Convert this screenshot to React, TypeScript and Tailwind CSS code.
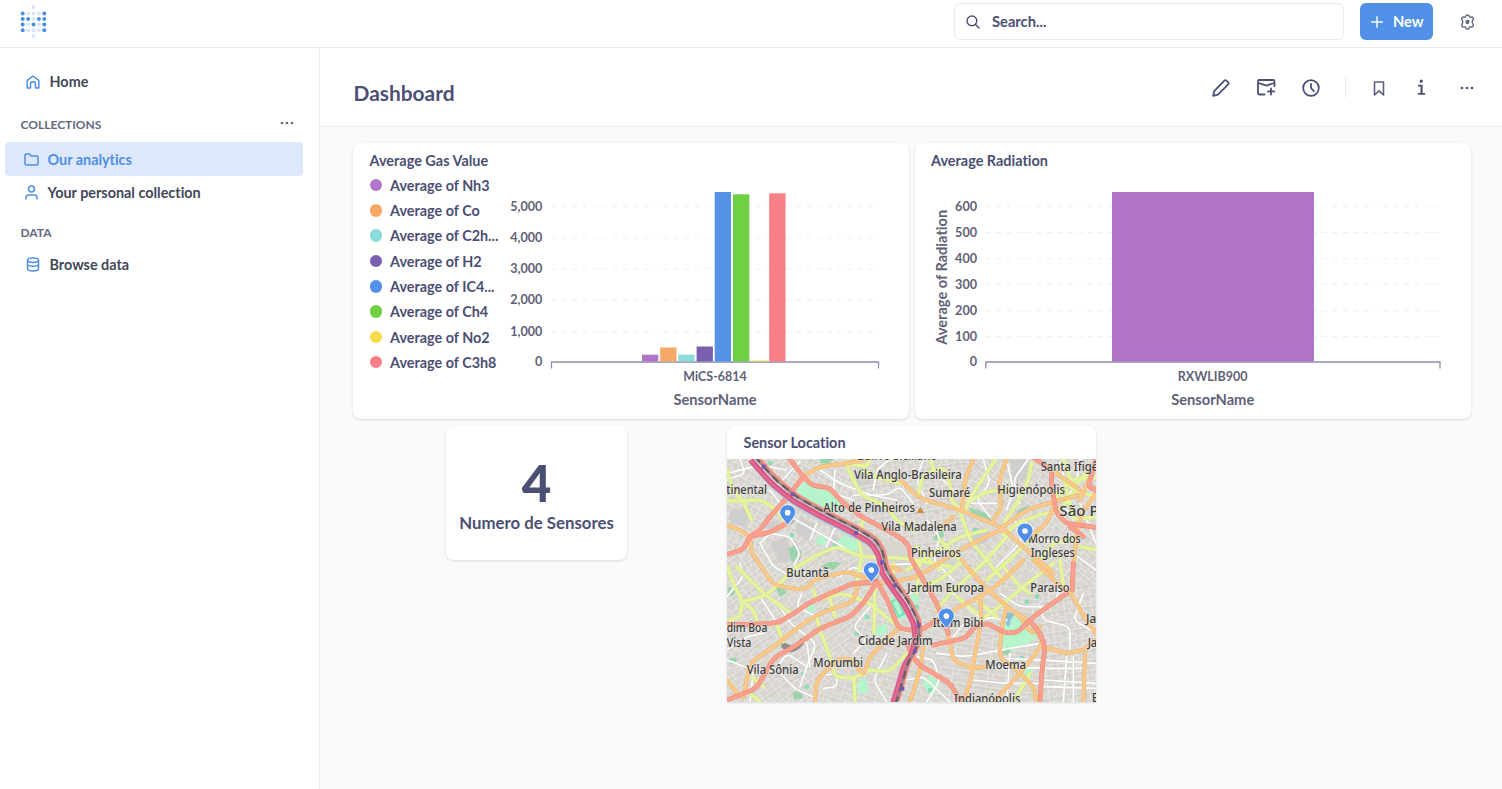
import React from "react";

type Pt = [number, number];

const LOGO_ROWS = ["..l..", "dllld", "ddldd", "dldld", "dllld", "..l.."];
const LOGO_Y = [7, 13.4, 19, 24.6, 30.2, 35.7];

function Logo() {
  return (
    <svg width="30" height="34" viewBox="18 4 30 34">
      {LOGO_ROWS.map((row, r) =>
        row.split("").map((c, i) =>
          c === "." ? null : (
            <circle key={`${r}-${i}`} cx={22.7 + i * 5.4} cy={LOGO_Y[r]} r="2" fill={c === "d" ? "#4a8ee6" : "#d9e6f8"} />
          )
        )
      )}
    </svg>
  );
}

function Icon({ w, h, box, sw = 1.5, children, className = "" }: { w: number; h: number; box: string; sw?: number; children: React.ReactNode; className?: string }) {
  return (
    <svg width={w} height={h} viewBox={box} fill="none" stroke="currentColor" strokeWidth={sw} strokeLinecap="round" strokeLinejoin="round" className={className}>
      {children}
    </svg>
  );
}

const Dots = () => (
  <svg width="14" height="4" viewBox="0 0 14 4" fill="currentColor">
    <circle cx="2" cy="2" r="1.3" />
    <circle cx="7" cy="2" r="1.3" />
    <circle cx="12" cy="2" r="1.3" />
  </svg>
);

function Sidebar() {
  return (
    <aside className="flex w-[320px] shrink-0 flex-col border-r border-[#eaebed] bg-white pl-[4.500px] pr-4 pt-[17px] text-[14.400px] font-bold leading-[18px] text-[#434758]">
      <div className="flex h-[33px] items-center pl-[21px]">
        <Icon w={14} h={14} box="0 0 14 14" className="text-[#4f8fe8]">
          <path d="M1.2 13V5.3L7 1l5.8 4.3V13H9.5V9.2a2.4 2.4 0 0 0-5 0V13z" />
        </Icon>
        <span className="pl-[10px]">Home</span>
      </div>
      <div className="mt-[13px] flex h-[24px] items-center justify-between pl-4 pr-[9px] text-[12px] text-[#63677d]">
        <span className="pt-[4px]">COLLECTIONS</span>
        <Dots />
      </div>
      <div className="mt-[7px] flex h-[34px] items-center rounded-[4px] bg-[#dde8fa] pl-[19px] text-[#4f8fe8]">
        <Icon w={15} h={13} box="0 0 15 13">
          <path d="M1 2.3C1 1.5 1.5 1 2.3 1h3l1.8 2h5.6c.8 0 1.3.5 1.3 1.3v6.4c0 .8-.5 1.3-1.3 1.3H2.3C1.5 12 1 11.500 1 10.700z" />
        </Icon>
        <span className="pl-[9px] pt-px">Our analytics</span>
      </div>
      <div className="flex h-[33px] items-center pl-[20px]">
        <Icon w={13} h={15} box="0 0 13 15" className="text-[#4f8fe8]">
          <circle cx="6.500" cy="4" r="3" />
          <path d="M1 14v-1.500C1 11 2 10 3.500 10h6c1.500 0 2.500 1 2.500 2.500V14" />
        </Icon>
        <span className="pl-[10px]">Your personal collection</span>
      </div>
      <div className="mt-[12px] flex h-[24px] items-center pl-4 text-[12px] text-[#63677d]">
        <span>DATA</span>
      </div>
      <div className="mt-[3px] flex h-[33px] items-center pl-[21px]">
        <Icon w={14} h={15} box="0 0 14 15" className="text-[#4f8fe8]">
          <ellipse cx="7" cy="3.200" rx="5.500" ry="2.200" />
          <path d="M1.500 3.200v8.600c0 1.200 2.500 2.200 5.500 2.200s5.500-1 5.500-2.200V3.200M1.500 7.200c0 1.200 2.500 2 5.500 2s5.500-.8 5.500-2" />
        </Icon>
        <span className="pl-[10px]">Browse data</span>
      </div>
    </aside>
  );
}

function TopBar() {
  return (
    <header className="flex h-[48px] shrink-0 items-start border-b border-[#eaebed] bg-white pl-[18px]">
      <div className="pt-[4px]">
        <Logo />
      </div>
      <div className="ml-auto mt-[3px] flex h-[37px] w-[390px] items-center rounded-[6px] border border-[#eaebed] pl-[11px] text-[#4c4f74]">
        <Icon w={14} h={14} box="0 0 14 14" sw={1.4}>
          <circle cx="5.900" cy="5.900" r="4.900" />
          <path d="M9.500 9.500l3.500 3.500" />
        </Icon>
        <span className="pl-[12px] text-[14.700px] font-bold">Search...</span>
      </div>
      <button className="ml-[16px] mt-[3px] flex h-[37px] w-[73px] items-center rounded-[6px] bg-[#5090e6] pl-[11px] text-white">
        <Icon w={12} h={12} box="0 0 12 12" sw={1.4}>
          <path d="M6 .7v10.600M.7 6h10.600" />
        </Icon>
        <span className="pl-[10px] text-[14.700px] font-bold">New</span>
      </button>
      <div className="ml-[27px] mr-[27px] mt-[13.500px] text-[#686c82]">
        <Icon w={15} h={16} box="0 0 15 16" sw={1.5}>
          <path d="M5.700 2.200C5.900 1.200 6.300.9 7.500.9s1.600.3 1.800 1.300c.2.900.8 1.200 1.700.9 1-.3 1.500-.1 2.100.9.600 1.100.5 1.600-.3 2.300-.700.700-.700 2.700 0 3.400.8.700.9 1.200.3 2.300-.6 1-1.100 1.200-2.100.9-.9-.3-1.500 0-1.700.9-.2 1-.6 1.300-1.800 1.300s-1.600-.3-1.800-1.300c-.2-.9-.8-1.200-1.700-.9-1 .3-1.500.1-2.100-.9-.6-1.100-.5-1.600.3-2.300.7-.7.7-2.700 0-3.400-.8-.7-.9-1.200-.3-2.300.6-1 1.100-1.200 2.100-.9.900.3 1.500 0 1.700-.9z" />
          <circle cx="7.500" cy="8" r="1.400" fill="currentColor" />
        </Icon>
      </div>
    </header>
  );
}

function Toolbar() {
  return (
    <div className="flex h-[79px] shrink-0 items-center border-b border-[#eaebed] bg-white pl-[33.500px] text-[#4c4f74]">
      <h1 className="pt-[12px] text-[20.900px] font-bold leading-[26px]">Dashboard</h1>
      <div className="ml-auto flex items-center pr-[28px] pt-px">
        <Icon w={18} h={18} box="0 0 18 18" sw={1.800}>
          <path d="M1.200 16.800l1-4.700L12.400 1.600c.6-.6 1.300-.6 1.900 0l1.900 1.800c.6.6.6 1.300 0 1.900L5.900 15.700z" />
        </Icon>
        <Icon w={19} h={17} box="0 0 19 17" sw={1.800} className="ml-[27px]">
          <path d="M7.500 15.500H2.200c-.7 0-1.200-.5-1.200-1.200V2.200C1 1.500 1.500 1 2.200 1h14.100c.7 0 1.200.5 1.200 1.200v5M1.500 4l6.300 2.200c1 .4 2 .4 3 0L17 4M14 9.500v6M11 12.400h6.200" />
        </Icon>
        <Icon w={18} h={18} box="0 0 18 18" sw={1.800} className="ml-[26px]">
          <circle cx="9" cy="9" r="7.800" />
          <path d="M9 4.800V9l2.800 3.200" />
        </Icon>
        <div className="ml-[25px] h-[21px] w-px bg-[#eaebed]" />
        <Icon w={12} h={15} box="0 0 12 15" sw={1.600} className="ml-[27px] mt-[2px] text-[#5c5f82]">
          <path d="M1.500 1h9v13L6 9.900 1.500 14z" />
        </Icon>
        <svg width="9" height="17" viewBox="0 0 9 17" className="ml-[32.500px]" fill="currentColor">
          <circle cx="4.300" cy="2.200" r="1.600" />
          <path d="M1 5.800h4.600v8.300H8v1.600H.9v-1.600h2.600V7.400H1z" />
        </svg>
        <div className="ml-[34px]">
          <Dots />
        </div>
      </div>
    </div>
  );
}

const SERIES: { label: string; color: string; top: number; x: number }[] = [
  { label: "Average of Nh3", color: "#b075c7", top: 354.7, x: 642 },
  { label: "Average of Co", color: "#f6a866", top: 347.5, x: 660.2 },
  { label: "Average of C2h...", color: "#8adcd8", top: 354.7, x: 678.300 },
  { label: "Average of H2", color: "#7a60ae", top: 346.5, x: 696.600 },
  { label: "Average of IC4...", color: "#5491e7", top: 192, x: 714.700 },
  { label: "Average of Ch4", color: "#6fd043", top: 194.300, x: 733 },
  { label: "Average of No2", color: "#f6dc4b", top: 360.500, x: 751 },
  { label: "Average of C3h8", color: "#f97f87", top: 193.300, x: 769.200 },
];

function Axis({ ticks, labelX, x1, x2, gridX2, name, xName, mid }: { ticks: [string, number][]; labelX: number; x1: number; x2: number; gridX2: number; name: string; xName: string; mid: number }) {
  return (
    <g fill="#5f6277" fontWeight="700" fontSize="12.600">
      {ticks.map(([t, y]) => (
        <g key={t}>
          <text x={labelX} y={y + 4.500} textAnchor="end">{t}</text>
          {t !== "0" && <path d={`M${x1} ${y + 0.500}H${gridX2}`} stroke="#f0f0f1" strokeDasharray="5 5.200" />}
        </g>
      ))}
      <text x={mid} y="380.500" textAnchor="middle" fontSize="12.500">{name}</text>
      <text x={mid} y="405" textAnchor="middle" fontSize="14.700">{xName}</text>
      <path d={`M${x1} 368.500V362H${x2}V368.500`} fill="none" stroke="#8c8ea9" strokeWidth="1.300" />
    </g>
  );
}

function GasCard() {
  return (
    <section className="flex h-[276px] w-[556px] flex-col rounded-[8px] bg-white pl-[16.500px] shadow-[0_1px_3px_rgba(0,0,0,0.13)]">
      <h2 className="pt-[8.500px] text-[14.450px] font-bold leading-[18px]">Average Gas Value</h2>
      <div className="-mt-[0.500px] flex">
        <ul className="w-[136px] shrink-0 pt-[4px] text-[14.400px] font-bold">
          {SERIES.map((s) => (
            <li key={s.label} className="flex h-[25.300px] items-center whitespace-nowrap">
              <span className="mb-px size-[12.500px] shrink-0 rounded-full" style={{ background: s.color }} />
              <span className="pl-[8px]">{s.label}</span>
            </li>
          ))}
        </ul>
        <svg width="400" height="246" viewBox="506 169 400 246">
          <Axis
            ticks={[["5,000", 206], ["4,000", 237.500], ["3,000", 268.500], ["2,000", 299.300], ["1,000", 331], ["0", 361.500]]}
            labelX={542.300}
            x1={551.500}
            x2={878.500}
            gridX2={877}
            name="MiCS-6814"
            xName="SensorName"
            mid={715}
          />
          {SERIES.map((s) => (
            <rect key={s.label} x={s.x} y={s.top} width="16.300" height={361.500 - s.top} fill={s.color} />
          ))}
        </svg>
      </div>
    </section>
  );
}

function RadiationCard() {
  return (
    <section className="flex h-[276px] w-[556px] flex-col rounded-[8px] bg-white shadow-[0_1px_3px_rgba(0,0,0,0.13)]">
      <h2 className="pl-[16.500px] pt-[8.500px] text-[14.450px] font-bold leading-[18px]">Average Radiation</h2>
      <svg width="556" height="246" viewBox="915 169 556 246" className="-mt-[0.500px]">
        <Axis
          ticks={[["600", 206], ["500", 232], ["400", 258.300], ["300", 284], ["200", 310.500], ["100", 336], ["0", 361.500]]}
          labelX={977}
          x1={985.800}
          x2={1440}
          gridX2={1444}
          name="RXWLIB900"
          xName="SensorName"
          mid={1212.700}
        />
        <rect x="1112" y="192" width="202" height="169.500" fill="#b075c7" />
        <text transform="translate(946.500 277.300) rotate(-90)" textAnchor="middle" fontSize="14.600" fontWeight="700" fill="#5f6277">Average of Radiation</text>
      </svg>
    </section>
  );
}

function smooth(nums: number[]) {
  const p: Pt[] = [];
  for (let i = 0; i < nums.length; i += 2) p.push([nums[i], nums[i + 1]]);
  let d = `M${p[0][0]} ${p[0][1]}`;
  for (let i = 1; i < p.length - 1; i++) {
    const a = p[i - 1], b = p[i], c = p[i + 1];
    d += `L${b[0] + (a[0] - b[0]) * 0.25} ${b[1] + (a[1] - b[1]) * 0.25}Q${b[0]} ${b[1]} ${b[0] + (c[0] - b[0]) * 0.25} ${b[1] + (c[1] - b[1]) * 0.25}`;
  }
  return d + `L${p[p.length - 1][0]} ${p[p.length - 1][1]}`;
}

function Roads({ list, color, edge, w }: { list: number[][]; color: string; edge: string; w: number }) {
  return (
    <g fill="none" strokeLinecap="round" strokeLinejoin="round">
      {list.map((r, i) => <path key={i} d={smooth(r)} stroke={edge} strokeWidth={w + 2} />)}
      {list.map((r, i) => <path key={i} d={smooth(r)} stroke={color} strokeWidth={w} />)}
    </g>
  );
}

const WHITE = [
  [21, 160, 120, 135, 200, 150], [60, 117, 75, 160, 21, 180], [175, 195, 215, 150, 240, 125], [150, 210, 210, 290, 300, 340, 400, 400], [120, 370, 150, 340, 210, 350, 240, 400, 220, 440, 270, 470],
  [120, 370, 160, 440, 215, 470], [270, 360, 290, 310], [320, 380, 345, 320, 400, 340], [300, 150, 360, 190, 450, 225, 530, 240], [345, 150, 340, 220, 400, 240], [460, 210, 470, 150, 510, 117], [400, 225, 500, 225, 540, 200, 580, 250],
  [620, 300, 660, 350, 640, 420, 700, 480], [610, 117, 590, 180, 620, 250], [670, 180, 740, 250, 830, 250], [790, 117, 810, 190, 770, 240, 810, 290], [860, 117, 880, 210, 860, 270], [925, 117, 880, 180, 900, 250], [880, 300, 960, 360, 1040, 370],
  [1020, 130, 1040, 200, 1120, 210], [1080, 117, 1070, 190, 1030, 250, 1060, 300], [1080, 250, 1128, 370], [1060, 400, 1128, 450], [920, 300, 900, 370, 820, 450], [21, 530, 70, 470, 60, 430], [120, 530, 160, 590, 170, 610],
  [245, 520, 230, 560, 290, 590, 310, 650], [180, 560, 210, 610, 290, 670, 260, 740, 240, 800], [100, 760, 170, 750, 230, 810, 280, 830], [230, 680, 260, 660, 270, 740], [310, 805, 350, 800, 350, 760, 320, 765], [160, 760, 200, 700, 260, 740],
  [360, 470, 400, 440, 440, 460], [490, 435, 600, 430], [590, 710, 640, 720, 660, 780, 620, 846], [560, 780, 610, 770, 690, 846], [700, 520, 770, 590, 860, 600], [840, 520, 900, 560, 1000, 560, 1020, 500], [960, 560, 970, 600, 1050, 620, 1050, 690],
  [830, 590, 730, 610, 700, 650], [650, 700, 740, 710, 840, 690, 960, 670], [850, 715, 960, 720, 1128, 730], [800, 740, 960, 745, 1090, 745], [970, 780, 1128, 790], [970, 800, 1128, 805], [1040, 710, 1030, 846], [1060, 710, 1060, 846], [760, 780, 850, 790, 960, 790],
  [870, 700, 860, 846], [540, 540, 600, 500, 650, 540], [1090, 520, 1060, 600, 1128, 640], [450, 560, 400, 620, 440, 660, 400, 700], [21, 690, 80, 650, 130, 640], [21, 720, 100, 750, 90, 846], [500, 700, 460, 780, 500, 846],
];
const YELLOW = [
  [21, 150, 40, 210, 70, 245, 95, 300], [21, 243, 125, 240, 175, 275, 200, 315], [375, 125, 400, 180, 425, 225, 500, 260, 530, 300, 580, 330], [430, 150, 480, 175, 540, 190], [430, 300, 415, 350, 425, 410, 410, 490], [210, 455, 280, 410, 350, 380, 425, 410, 560, 415, 690, 440],
  [380, 130, 440, 140, 450, 117], [595, 225, 605, 175, 640, 150, 670, 145, 690, 190, 695, 245, 725, 270], [630, 117, 640, 150], [828, 117, 775, 195, 745, 245, 735, 275], [745, 245, 800, 215, 860, 210], [935, 130, 925, 180, 900, 235, 855, 305, 850, 320], [850, 345, 900, 305, 960, 285, 1020, 270, 1060, 220],
  [560, 450, 640, 400, 720, 350, 800, 330], [720, 275, 750, 360, 800, 420, 850, 480], [660, 360, 720, 420, 770, 470], [590, 380, 660, 450], [860, 350, 790, 430, 700, 510, 650, 570], [960, 330, 900, 390, 800, 480], [1000, 150, 1060, 210, 1128, 230], [1030, 117, 1060, 200, 1100, 160], [1000, 240, 1050, 180, 1128, 170], [1040, 210, 1060, 300, 1128, 290], [990, 200, 1050, 250], [960, 420, 1000, 370, 1070, 350], [1080, 380, 1128, 390],
  [21, 440, 45, 500, 68, 545, 60, 590, 30, 600], [68, 545, 140, 525, 200, 470], [50, 440, 130, 520, 215, 582], [290, 590, 300, 630, 330, 710, 345, 770, 400, 775, 440, 755], [402, 775, 405, 846], [465, 490, 462, 640], [280, 510, 290, 540, 370, 520, 450, 550, 535, 620], [440, 750, 510, 755, 560, 700], [170, 615, 190, 665], [325, 520, 345, 590], [110, 600, 100, 570, 70, 545],
  [780, 600, 840, 560, 910, 500, 1000, 430], [770, 540, 830, 590], [710, 530, 770, 580], [720, 430, 660, 480, 600, 500], [850, 440, 900, 500, 930, 520], [880, 846, 930, 760], [90, 820, 120, 846], [1020, 420, 1030, 500], [95, 770, 130, 800], [520, 430, 520, 490], [600, 420, 590, 520],
];
const ORANGE = [
  [250, 168, 300, 140, 380, 130, 440, 117], [540, 180, 600, 235, 720, 270, 770, 290, 850, 325, 920, 390, 1000, 460], [760, 117, 735, 180, 725, 270], [860, 117, 835, 190, 845, 262, 815, 310], [850, 320, 920, 270, 1000, 245, 1080, 225], [850, 325, 720, 390, 640, 440, 590, 470, 500, 490, 470, 485],
  [110, 420, 160, 495, 250, 510, 290, 475, 385, 455, 455, 480], [70, 830, 90, 730, 160, 680, 230, 625, 300, 580, 400, 545, 415, 490, 465, 482], [285, 846, 290, 780, 350, 720, 390, 715, 430, 765, 450, 710, 480, 680, 535, 625], [21, 315, 60, 330, 90, 352, 95, 400, 110, 420],
  [725, 420, 775, 480, 860, 560, 940, 610, 970, 670, 900, 760, 820, 846], [910, 420, 840, 490, 780, 530, 700, 570, 650, 605], [780, 530, 785, 600, 765, 700, 755, 770, 730, 846], [860, 560, 845, 620, 838, 710, 890, 750, 940, 800, 950, 846], [970, 680, 1040, 700, 1090, 690, 1128, 660], [1095, 700, 1090, 846],
  [685, 650, 700, 720, 755, 745, 800, 740], [940, 420, 1000, 480, 1060, 530, 1085, 580, 1128, 640], [610, 680, 600, 750, 570, 846], [1128, 220, 1085, 280, 1070, 350, 1060, 430, 1055, 520], [1000, 260, 980, 310, 930, 350], [700, 290, 660, 325], [860, 560, 900, 590, 935, 640, 960, 620],
  [1010, 160, 1080, 210], [540, 450, 510, 440], [21, 780, 60, 830], [1128, 130, 1080, 240],
];
const SALMON = [
  [205, 112, 250, 170, 275, 195, 330, 205, 370, 250, 425, 290, 500, 330, 545, 355, 568, 380, 572, 415, 610, 480, 650, 550, 685, 640], [250, 170, 200, 235, 150, 290, 120, 330, 90, 350, 70, 388, 15, 405], [90, 350, 150, 337, 200, 310], [15, 615, 170, 610, 230, 575, 265, 550, 330, 520, 400, 490, 465, 487],
  [15, 842, 110, 805, 160, 715, 230, 675, 300, 625, 390, 590, 430, 550, 468, 490], [470, 485, 505, 545, 535, 625, 600, 633, 650, 600], [640, 675, 735, 655, 765, 620, 800, 610, 860, 640, 895, 635, 940, 590, 1040, 520], [560, 670, 590, 730, 690, 790, 725, 850], [935, 610, 960, 640, 975, 680, 965, 760, 960, 850],
  [940, 112, 995, 150, 995, 200, 1010, 280, 1040, 310, 1128, 322], [1128, 117, 1105, 200, 1128, 210], [1060, 430, 1057, 510], [1050, 320, 1090, 350],
];
const RIVER = [100, 112, 160, 180, 225, 233, 300, 275, 408, 330, 462, 362, 485, 400, 493, 450, 530, 505, 560, 545, 590, 605, 594, 645, 585, 690, 560, 730, 543, 790, 525, 850];
const PARKS = [
  "M228 205L262 182L292 200L330 212L362 250L352 275L300 265L235 240Z", "M285 370L305 340L325 350L312 378Z", "M345 370L375 345L420 370L415 392L380 398Z", "M850 575L880 575L925 610L950 655L858 705L848 690L854 610Z", "M500 540L530 525L560 590L545 600L520 585Z",
  "M265 555L285 552L280 580L262 585Z", "M412 790L435 770L445 815L415 822Z", "M605 785L635 765L660 800L635 830Z", "M470 620L500 610L500 640L468 650Z", "M840 225L848 225L845 260L838 260Z", "M560 535L590 515L600 540L575 560Z", "M910 740L945 745L930 765L908 768Z",
];
const DARK_PARKS = ["M745 262L800 280L815 305L765 295Z", "M640 350L670 330L672 350L645 362Z", "M205 385L225 375L245 395L240 420L215 425Z", "M30 715L50 712L48 730L28 732Z", "M300 117L340 117L325 132L300 130Z", "M895 270L925 255L920 270L890 285Z", "M845 700L860 680L875 695L860 706Z", "M220 815L245 812L248 835L222 840Z", "M300 440L330 425L365 428L340 450Z", "M165 500L185 490L200 520L180 530Z", "M25 500L50 510L40 525L21 530Z"];
const URBAN = ["M240 290L290 315L270 370L225 335Z", "M330 340L390 370L370 400L320 380Z", "M150 370L200 350L220 420L180 430Z", "M870 117L930 117L915 180L880 190Z", "M760 320L810 330L800 370L740 380Z", "M30 270L90 260L80 320L30 310Z", "M400 155L440 150L455 190L415 200Z", "M130 320L160 300L190 320L160 335Z", "M440 250L490 255L500 280L450 280Z"];

const LABELS: [string, number, number, number, number?][] = [
  ["Bairro Siciliano", 412, 121, 240], ["Vila Anglo-Brasileira", 402, 178, 323], ["Santa Ifigênia", 962, 154, 222], ["tinental", 19, 223, 122], ["Sumaré", 627, 230, 124], ["Higienópolis", 832, 221, 203], ["Alto de Pinheiros", 310, 277, 275],
  ["São Paulo", 1018, 287, 212, 45], ["Vila Madalena", 484, 332, 226], ["Pinheiros", 573, 411, 150], ["Morro dos", 925, 368, 157], ["Ingleses", 932, 412, 133], ["Butantã", 199, 470, 128], ["Jardim Europa", 562, 516, 230], ["Paraíso", 931, 515, 118],
  ["dim Boa", 20, 637, 122], ["Vista", 20, 681, 74], ["Itaim Bibi", 638, 620, 152], ["Cidade Jardim", 414, 676, 224], ["Vila Sônia", 80, 762, 156], ["Morumbi", 280, 740, 149], ["Moema", 796, 746, 122], ["Indianópolis", 702, 848, 199], ["Jardim", 1098, 608, 110], ["Jabaquara", 1103, 680, 160], ["B", 1116, 847, 20],
];
const PINS: Pt[] = [[203, 315], [454, 487], [915, 370], [679, 625]];

const STREETS: { points: string; id: number }[] = [
  { points: "21,117 420,117 400,330 21,420", id: 1 }, { points: "420,117 740,117 740,420 400,330", id: 2 }, { points: "740,117 1128,117 1128,500 740,420", id: 3 }, { points: "21,420 400,330 480,500 300,846 21,846", id: 4 },
  { points: "480,500 740,420 620,846 300,846", id: 5 }, { points: "740,420 960,480 960,846 620,846", id: 6 }, { points: "960,480 1128,500 1128,846 960,846", id: 2 },
];
const ANGLES = [28, -8, 38, -35, 18, 8];

function SensorMap() {
  return (
    <svg width="369" height="243" viewBox="21 117 1107 729" className="block" fontFamily="'Noto Sans', sans-serif">
      <defs>
        {ANGLES.map((a, i) => (
          <pattern key={a} id={`street-${i + 1}`} width={38 + i * 3} height={30 + i * 2} patternUnits="userSpaceOnUse" patternTransform={`rotate(${a})`}>
            <path d={`M0 1H60M0 15H${20 + i * 3}M1 0V40M17 0V17M${24 + i} 15V40M${24 + i} 24H60`} stroke="#ebeae6" strokeWidth="2.600" fill="none" />
            <path d="M0 7.500H60M9 0V15M30 2V40" stroke="#cbc9c5" strokeWidth="1.500" fill="none" />
          </pattern>
        ))}
      </defs>
      <rect x="21" y="117" width="1107" height="729" fill="#d9d6d0" />
      {STREETS.map((s, i) => <polygon key={i} points={s.points} fill={`url(#street-${s.id})`} />)}
      {URBAN.map((d) => <path key={d} d={d} fill="#cfcecd" />)}
      {PARKS.map((d) => <path key={d} d={d} fill="#b4f5cc" />)}
      {DARK_PARKS.map((d) => <path key={d} d={d} fill="#9bd3aa" />)}
      <path d="M858 577L885 580L872 600L868 620L858 615Z" fill="#8fc0d8" />
      <g fill="#86deb4">
        {[[215, 345], [345, 372], [250, 762], [260, 800], [765, 330], [905, 715], [320, 570], [410, 640], [950, 530], [700, 500], [150, 130], [590, 560], [920, 545], [50, 620], [440, 590], [630, 810]].map(([x, y]) => (
          <rect key={`${x}-${y}`} x={x - 6} y={y - 6} width="13" height="12" rx="3" />
        ))}
      </g>
      <Roads list={WHITE} color="#ffffff" edge="#cfcdca" w={5} />
      <path d="M190 668Q215 695 242 662L246 672Q215 708 188 680Z" fill="#8d8d8d" stroke="#8d8d8d" strokeWidth="8" />
      <path d="M515 545L533 537L552 582L535 590Z" fill="none" stroke="#79e0bb" strokeWidth="6" />
      <Roads list={YELLOW} color="#e6f59c" edge="#cfdf8a" w={9.500} />
      <Roads list={ORANGE} color="#fac888" edge="#e3ae6c" w={10} />
      <Roads list={SALMON} color="#f99f8b" edge="#e3806f" w={12} />
      <g fill="none" strokeLinejoin="round">
        <path d={smooth(RIVER)} stroke="#9fcbe0" strokeWidth="7" transform="translate(-6 19)" />
        <path d={smooth(RIVER)} stroke="#f08f80" strokeWidth="8" transform="translate(10 -7)" />
        <path d={smooth(RIVER)} stroke="#d2588a" strokeWidth="17" transform="translate(-8 8)" />
        <path d={smooth(RIVER)} stroke="#e8688c" strokeWidth="7" transform="translate(-9 9)" />
        <path d={smooth(RIVER)} stroke="#a0848c" strokeWidth="8" transform="translate(4 -3)" />
        <path d={smooth(RIVER)} stroke="#625d66" strokeWidth="6.500" strokeDasharray="24 16" transform="translate(4 -3)" />
      </g>
      <g fill="#7757ac">
        {[[131, 140], [218, 223], [408, 339], [486, 427], [526, 496], [596, 615], [585, 693], [547, 806]].map(([x, y]) => <rect key={y} x={x - 6} y={y - 6} width="12" height="12" />)}
      </g>
      <path d="M601 260L612 279H590Z" fill="#d3893d" />
      <g fill="#3a3a3a" stroke="#f0eee9" strokeWidth="4" strokeOpacity=".6" strokeLinejoin="round" paintOrder="stroke">
        {LABELS.map(([t, x, y, len, size]) => (
          <text key={t + x} x={x} y={y} fontSize={size ?? 36} textLength={len} lengthAdjust="spacingAndGlyphs" fontWeight="500">{t}</text>
        ))}
      </g>
      {PINS.map(([x, y]) => (
        <g key={x} transform={`translate(${x} ${y})`}>
          <path d="M-2 4L26 -24L20 -6Z" fill="#000" opacity=".12" />
          <path d="M0 2C-6 -11 -24 -24 -24 -38A24 23 0 0 1 24 -38C24 -24 6 -11 0 2Z" fill="#4f8fe8" stroke="#fff" strokeWidth="2.500" />
          <circle cy="-37" r="8.500" fill="#fff" />
        </g>
      ))}
    </svg>
  );
}

export default function App() {
  return (
    <div className="flex h-[789px] w-[1502px] flex-col overflow-hidden bg-[#f9fafc] font-['Lato',sans-serif] text-[#4c4f74] [font-variant-ligatures:none]">
      <TopBar />
      <div className="flex min-h-0 flex-1">
        <Sidebar />
        <main className="flex min-w-0 flex-1 flex-col">
          <Toolbar />
          <div className="pl-[33px] pt-[16px]">
            <div className="flex gap-[5.500px]">
              <GasCard />
              <RadiationCard />
            </div>
            <div className="flex items-start pl-[93px] pt-[7px]">
              <section className="flex h-[134px] w-[181px] flex-col items-center rounded-[8px] bg-white pt-[30px] shadow-[0_1px_3px_rgba(0,0,0,0.13)]">
                <div className="text-[51px] font-black leading-[54px]">4</div>
                <div className="whitespace-nowrap pt-px text-[16.800px] font-bold leading-[24px]">Numero de Sensores</div>
              </section>
              <section className="ml-[100px] flex w-[369px] flex-col overflow-hidden rounded-t-[8px] bg-white shadow-[0_1px_3px_rgba(0,0,0,0.13)]">
                <h2 className="h-[33px] pl-[16.500px] pt-[8px] text-[14.450px] font-bold leading-[18px]">Sensor Location</h2>
                <SensorMap />
              </section>
            </div>
          </div>
        </main>
      </div>
    </div>
  );
}
